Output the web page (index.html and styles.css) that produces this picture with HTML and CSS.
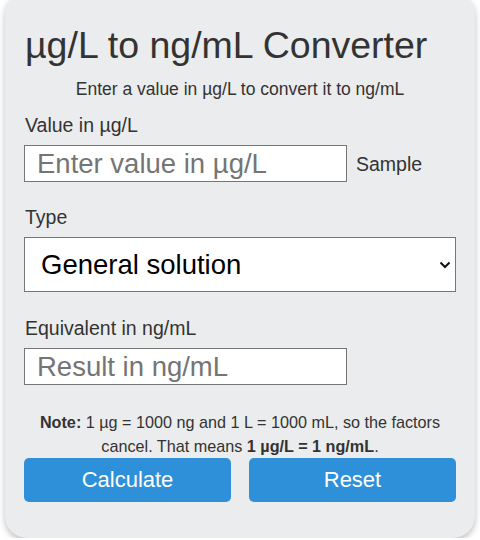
FILE: index.html
```html
<!DOCTYPE html>
<html lang="en">
<head>
    <meta charset="UTF-8">
    <meta name="viewport" content="width=device-width, initial-scale=1.0">
    <title>µg/L to ng/mL Converter</title>
    <link rel="stylesheet" href="styles.css">
</head>
<body>
    <div class="converter">
        <h1>µg/L to ng/mL Converter</h1>
        <p class="intro">Enter a value in µg/L to convert it to ng/mL</p>

        <label for="value">Value in µg/L</label>
        <div class="input-row">
            <input type="text" id="value" placeholder="Enter value in µg/L">
            <span class="unit">Sample</span>
        </div>

        <label for="type">Type</label>
        <div class="select-wrap">
            <select id="type">
                <option>General solution</option>
                <option>Blood serum</option>
                <option>Water sample</option>
            </select>
            <svg class="chevron" width="12" height="8" viewBox="0 0 12 8">
                <path d="M1.5 1.5 L6 6 L10.5 1.5" fill="none" stroke="#111" stroke-width="2"/>
            </svg>
        </div>

        <label for="result">Equivalent in ng/mL</label>
        <div class="input-row">
            <input type="text" id="result" placeholder="Result in ng/mL" readonly>
        </div>

        <p class="note"><b>Note:</b> 1 µg = 1000 ng and 1 L = 1000 mL, so the factors cancel. That means <b>1 µg/L = 1 ng/mL</b>.</p>

        <div class="buttons">
            <button onclick="calculate()">Calculate</button>
            <button onclick="resetForm()">Reset</button>
        </div>
    </div>

    <script>
        function calculate() {
            const value = parseFloat(document.getElementById('value').value);
            if (!isNaN(value)) {
                // 1 µg/L is exactly 1 ng/mL
                document.getElementById('result').value = value;
            }
        }

        function resetForm() {
            document.getElementById('value').value = '';
            document.getElementById('result').value = '';
            document.getElementById('type').selectedIndex = 0;
        }
    </script>
</body>
</html>
```

FILE: styles.css
```css
body {
    font-family: "Liberation Sans", Arial, sans-serif;
    background-color: #fff;
    color: #333;
    margin: 0;
    padding: 0;
}
.converter {
    margin: -8px 5px 0;
    padding: 32px 19px 36px;
    background-color: #ebeced;
    border-radius: 22px;
    box-shadow: 0 3px 6px rgba(0, 0, 0, 0.25);
}
h1 {
    font-size: 37.5px;
    font-weight: normal;
    line-height: 42px;
    margin: 0 0 0 1px;
}
.intro {
    font-size: 17.5px;
    line-height: 20px;
    text-align: center;
    margin: 13px 0 14px;
}
label {
    display: block;
    font-size: 19.5px;
    line-height: 24px;
    margin: 0 0 8px 1px;
}
.input-row {
    display: flex;
    align-items: center;
    gap: 9px;
    margin-bottom: 23px;
}
.input-row input {
    width: 323px;
    height: 37px;
    box-sizing: border-box;
    padding: 0 12px;
    border: 1px solid #767676;
    background-color: #fff;
    font-family: inherit;
    font-size: 27.5px;
    color: #000;
}
.input-row input::placeholder {
    color: #757575;
}
.unit {
    font-size: 19.5px;
    margin-top: 2px;
}
.select-wrap {
    position: relative;
    margin-bottom: 24px;
}
select {
    display: block;
    width: 100%;
    height: 55px;
    box-sizing: border-box;
    padding: 0 34px 0 16px;
    border: 1px solid #767676;
    border-radius: 0;
    background-color: #fff;
    font-family: inherit;
    font-size: 27.5px;
    color: #000;
    appearance: none;
    -webkit-appearance: none;
}
.chevron {
    position: absolute;
    right: 5px;
    top: 24px;
    pointer-events: none;
}
.note {
    font-size: 16.2px;
    line-height: 24px;
    text-align: center;
    margin: 25px 0 0;
}
.buttons {
    display: flex;
    gap: 18px;
}
.buttons button {
    flex: 1;
    height: 44px;
    border: none;
    border-radius: 5px;
    background-color: #2e90d8;
    color: #fff;
    font-family: inherit;
    font-size: 22px;
    cursor: pointer;
}
.buttons button:hover {
    background-color: #2680c2;
}
```
